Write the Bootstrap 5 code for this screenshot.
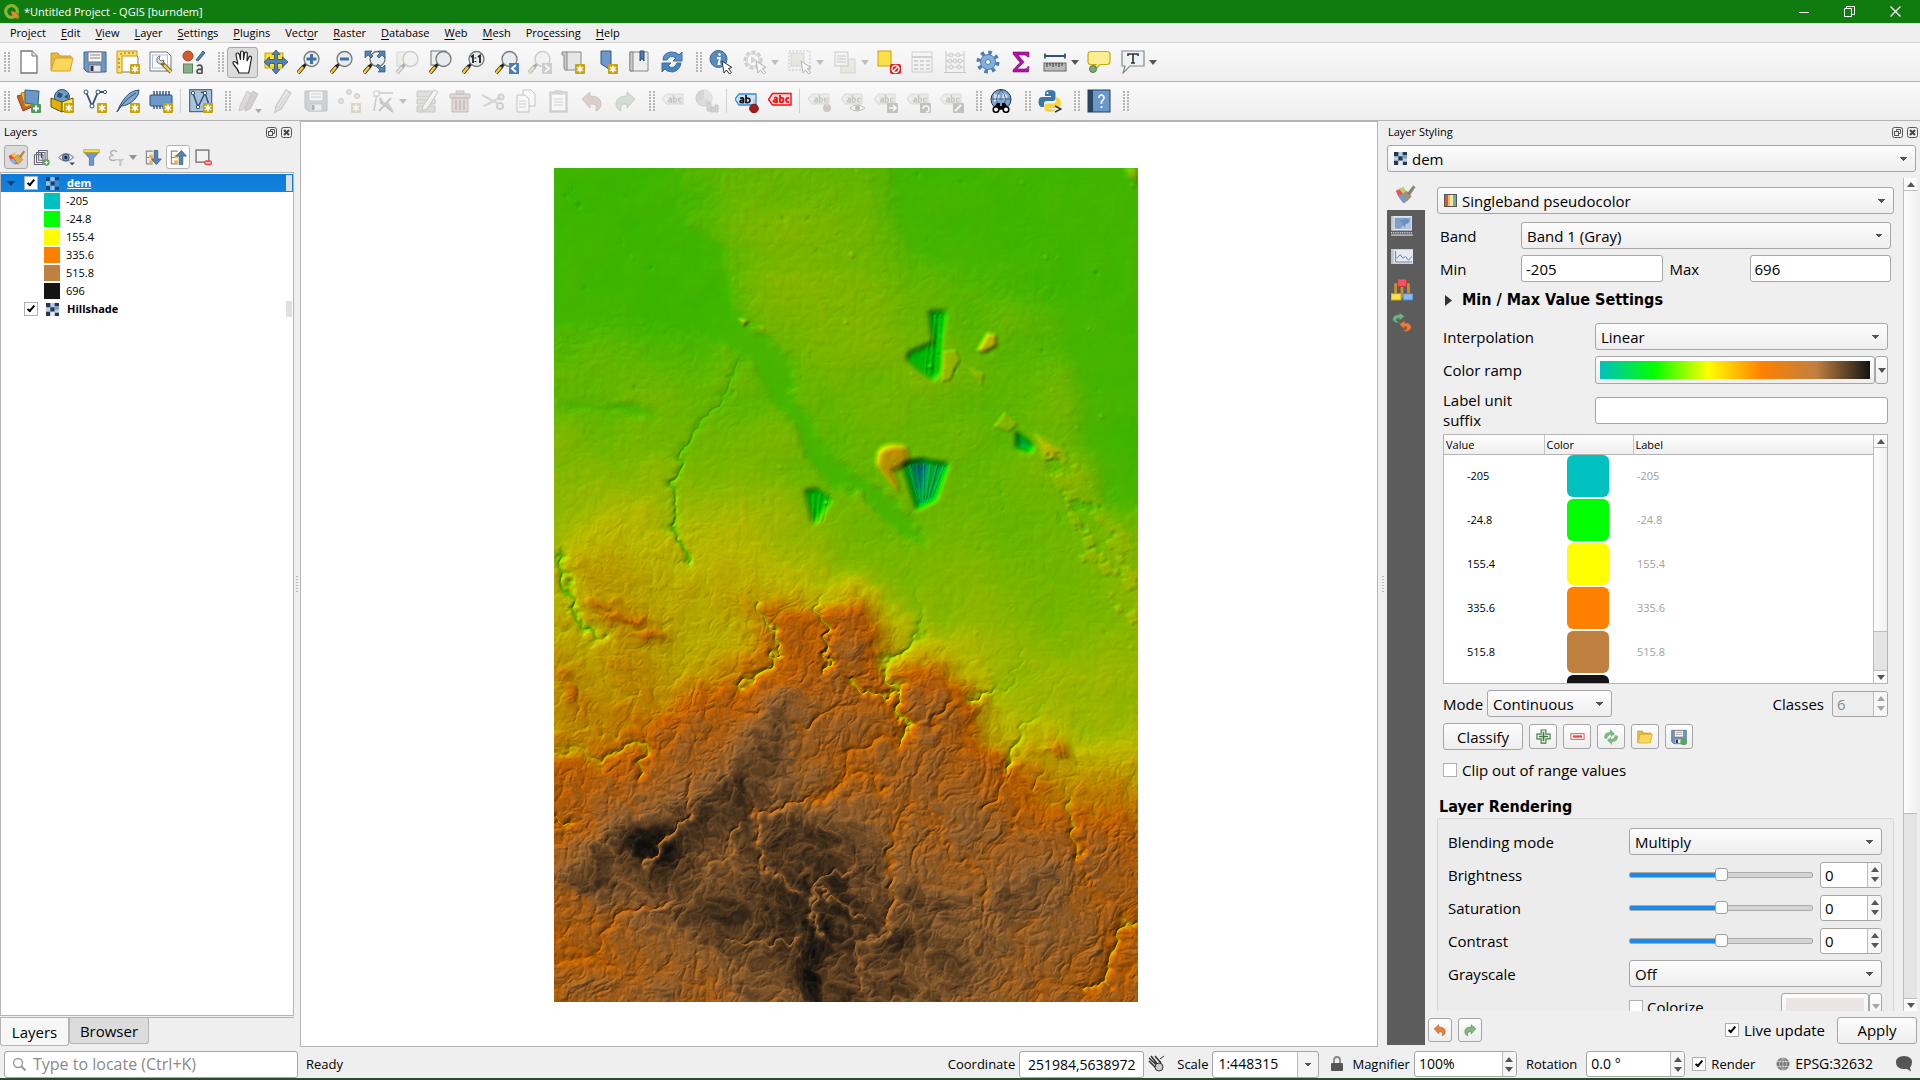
<!DOCTYPE html>
<html lang="en">
<head>
<meta charset="utf-8">
<meta name="viewport" content="width=device-width, initial-scale=1">
<title>*Untitled Project - QGIS [burndem]</title>
<link rel="stylesheet" href="https://cdn.jsdelivr.net/npm/bootstrap@5.3.0/dist/css/bootstrap.min.css">
<style>
:root{--ui:#efefef;--line:#b4b4b4;--ink:#000}
body{font-family:"Open Sans","Noto Sans",sans-serif;font-size:15px;line-height:20px;color:var(--ink);background:var(--ui);overflow:hidden}
button,select,input{font-family:inherit;color:inherit}
svg{display:block;flex:none}
.titlebar{background:#107c10;color:#fff;height:23px;font-size:11px}
.winbtn{width:46px;height:23px;border:0;background:none;padding:0 3px 0 0}
.menus{height:20px;border-bottom:1px solid #d4d4d4;padding-left:3px;font-size:11px;gap:1px}
.menus a{color:#000;text-decoration:none;padding:0 7px;line-height:20px}
.menus u{text-underline-offset:2px}
.tools{height:39px;background:linear-gradient(#fafafa,#eee);border-bottom:1px solid var(--line);padding-left:4px;gap:2px}
.grip{width:6px;height:20px;margin:0 1px 0 7px;background:radial-gradient(circle at 1px 1px,#b5b5b5 1px,transparent 1px) 0 0/4px 3px}
.grip.first{margin-left:0}
.tbtn{width:31px;height:31px;border:1px solid transparent;border-radius:3px;background:none;padding:2px;display:flex;align-items:center;justify-content:center}
.tbtn svg{width:24px;height:24px}
.tbtn.on{background:#dcdcdc;border-color:#a8a8a8}
.tbtn.drop{width:43px;justify-content:flex-start;gap:4px;padding-left:4px}
.tbtn:disabled{opacity:.34;filter:grayscale(.7)}
.arr{width:0;height:0;border:4px solid transparent;border-top:5px solid #555;border-bottom:0;flex:none}
.arr.up{border-top:0;border-bottom:5px solid #555}
.vsep{width:1px;height:24px;background:#cfcfcf;margin:0 2px}
.dock-left{width:294px}
.dock-right{width:533px}
.dock-title{height:24px;font-size:11px;padding:0 2px 2px 4px}
.dock-title.r{padding-left:1px}
.sq{width:11px;height:11px;padding:0;border:0;background:none;display:flex}
.ltools{height:27px;padding:0 4px;gap:1px}
.lbtn{width:24px;height:24px;border:1px solid transparent;border-radius:3px;background:none;padding:0;display:flex;align-items:center;justify-content:center}
.lbtn svg{width:17px;height:17px}
.lbtn.on{background:#dcdcdc;border-color:#a8a8a8}
.lbtn.lit{background:#fff;border-color:#b4b4b4}
.lbtn.menu2{width:36px;gap:4px;opacity:.6}
.tree{border:1px solid var(--line);background:#fff;font-size:11px;padding-top:1px}
.trow{height:18px;line-height:18px;padding:0 1px 0 23px}
.trow.sel{background:linear-gradient(#0c7adb,#1483dd);color:#fff;padding-left:6px}
.trow.sel .arr{border-top-color:#0b3a66;margin-right:9px}
.trow .mark2{width:6px;height:16px;background:#e0e0e0;margin-left:auto}
.trow.leg{padding-left:43px}
.sw{width:16px;height:16px;margin-right:6px}
.chk{appearance:none;width:14px;height:14px;border:1px solid #b0b0b0;background:#fff;margin:0;flex:none;position:relative;border-radius:0}
.chk:checked::after{content:"";position:absolute;left:4px;top:1px;width:4px;height:8px;border:solid #000;border-width:0 2px 2px 0;transform:rotate(40deg)}
.dtabs{border-top:1px solid var(--line);margin-top:1px;height:30px}
.dtab{border:1px solid var(--line);border-top:0;border-radius:0 0 3px 3px;font-size:15px;padding:0;height:28px;width:69px;background:#f7f7f7}
.dtab.off{background:#dcdcdc;width:80px;height:26px}
.split{width:6px;display:flex;align-items:center;justify-content:center}
.split.wide{width:9px}
.split i{width:2px;height:17px;background:repeating-linear-gradient(#bbb 0 1px,transparent 1px 3px)}
.mapview{background:#fff;border:1px solid var(--line);padding:2px 0 0 14px}
.mapview canvas{width:584px;max-height:100%}
.field{border:1px solid #a6a6a6;border-radius:3px;background-color:#fff;height:27px;padding:0 4px;font-size:15px;line-height:20px;color:#000;min-width:0}
select.field{appearance:none;padding-left:5px;background-image:linear-gradient(45deg,transparent 50%,#555 50%),linear-gradient(135deg,#555 50%,transparent 50%),linear-gradient(#fdfdfd,#eee);background-size:4px 4px,4px 4px,100% 100%;background-position:right 11px top 11px,right 7px top 11px,0 0;background-repeat:no-repeat}
.withicon{position:relative}
.withicon svg{position:absolute;left:7px;top:7px}
.withicon select{width:100%;padding-left:24px}
.push{border:1px solid #a6a6a6;border-radius:3px;background:linear-gradient(#fdfdfd,#eee);height:27px;font-size:15px;padding:0;display:flex;align-items:center;justify-content:center}
.push.wide{width:80px}
.push.mini{width:28px;height:25px}
.push.small2{width:24px;height:24px}
.push.more{width:13px;height:28px}
.sidetabs{width:38px;background:#5c5c5c;margin-bottom:2px}
.sidetabs button{width:38px;height:31px;border:0;background:none;padding:0 8px 0 0;display:flex;align-items:center;justify-content:center}
.sidetabs button:first-child{background:var(--ui);height:32px;padding:0 3px 0 0}
.sidetabs .tall{height:35px}
.body2{padding-top:6px;min-height:0}
.scrollrow{flex:1 1 0;min-height:0}
.styler{overflow:hidden;padding:9px 9px 0 12px;min-width:0}
.vbar{width:14px;flex:none;border-left:1px solid #bdbdbd;background:#e4e4e4}
.vbar .cap{height:13px;background:#fcfcfc;border-bottom:1px solid #bdbdbd;display:flex;align-items:center;justify-content:center}
.vbar .cap.dn{border-bottom:0;border-top:1px solid #bdbdbd}
.vbar .thumb{background:linear-gradient(90deg,#fdfdfd,#f1f1f1);border-bottom:1px solid #bdbdbd}
.frow{display:flex;align-items:center}
.frow+.frow{margin-top:6px}
.head2{font-family:"DejaVu Sans Condensed","Open Sans",sans-serif;font-weight:700;font-size:16px;line-height:22px}
.w-band{width:81px;flex:none}.w-interp{width:152px;flex:none}.w-blend{width:181px;flex:none}
.w-max{width:87px;flex:none;padding-left:7px}
.inset-a{padding:0 3px}
.inset-b{padding:0 6px}
.disclose{margin:7px 0 12px 8px;gap:9px}
.ramp{height:28px;padding:4px}
.ramp span{display:block;width:100%;height:100%;background:linear-gradient(90deg,#00c0c0,#00ff00 20%,#ffff00 40%,#ff8000 60%,#c08040 80%,#141414)}
.ramp.pale{width:88px}
.ramp.pale span{background:#ebe4e4}
.classes{border:1px solid var(--line);height:250px;background:#fff;font-size:11px;margin:4px 0 6px}
.classes table{width:100%;border-collapse:collapse}
.classes th{height:19px;line-height:17px;font-weight:400;padding:0 2px;border-right:1px solid #c4c4c4;border-bottom:1px solid var(--line);background:linear-gradient(#fff,#eee)}
.classes th:last-child{border-right:0}
.classes td{height:44px;padding:0}
.classes td:first-child{padding-left:23px}
.classes td:last-child{padding-left:4px;color:#a0a0a0}
.c-val{width:100px}.c-col{width:89px}
.chip{width:42px;height:42px;border-radius:6px;margin-left:23px}
.spin{display:flex;flex:none;border:1px solid #a6a6a6;border-radius:3px;background:#fff;height:26px;overflow:hidden}
.spin input{border:0;width:100%;min-width:0;padding:0 4px;background:none;font-size:15px;line-height:20px}
.spin .steps{width:14px;flex:none;border-left:1px solid #bdbdbd;background:#f6f6f6;display:flex;flex-direction:column;align-items:center;justify-content:center;gap:5px}
.spin.dis{background:#ededed}.spin.dis input{color:#8a8a8a}.spin.dis .arr{opacity:.5}
.spin.s56{width:56px}.spin.s62{width:62px}.spin.s99{width:99px}.spin.s103{width:103px}
.group{border:1px solid #d6d6d6;border-radius:2px;background:#ececec;padding:6px 11px 0 10px}
.group .frow{height:33px;margin:0}
input[type=range]{appearance:none;background:none;width:100%;min-width:0;height:14px;margin:0 7px 0 0;display:block}
input[type=range]::-webkit-slider-runnable-track{height:6px;border:1px solid #aaa;border-radius:2px;background:linear-gradient(90deg,#1a8ae6 50%,#d4d4d4 50%)}
input[type=range]::-webkit-slider-thumb{appearance:none;width:13px;height:13px;margin-top:-5px;border:1px solid #a0a0a0;border-radius:3px;background:#fbfbfb}
.foot{height:36px;padding:2px 3px 0}
.statusbar{height:33px;padding-top:3px;font-size:14px;border-bottom:2px solid #2d4a2d}
.statusbar label,.statusbar .txt{font-size:13px;white-space:nowrap}
.statusbar .txt.crs{font-size:14px}
.statusbar .field,.statusbar .spin input{font-size:14px}
.locate{width:294px;position:relative}
.locate .field{width:100%;padding-left:28px;font-size:16px}
.locate input::placeholder{color:#8a8a8a;opacity:1}
.locate svg{position:absolute;left:8px;top:6px}
.w125{width:125px}
select.field.split2{width:107px;background-image:linear-gradient(45deg,transparent 50%,#555 50%),linear-gradient(135deg,#555 50%,transparent 50%),linear-gradient(#bbb,#bbb),linear-gradient(#f4f4f4,#f4f4f4);background-size:4px 4px,4px 4px,1px 100%,20px 100%;background-position:right 10px top 11px,right 6px top 11px,right 20px top 0,right 0 top 0}
</style>
<script src="https://cdn.jsdelivr.net/npm/bootstrap@5.3.0/dist/js/bootstrap.bundle.min.js"></script>
</head>
<body class="d-flex flex-column vh-100">

<svg width="0" height="0" class="position-absolute" aria-hidden="true">
<defs>
<g id="star"><rect x="14" y="14" width="10" height="10" rx="1" fill="#c9a20c"/><path d="M19 15.500v7M15.800 17.200l6.400 3.600M22.200 17.200l-6.400 3.600" stroke="#fff" stroke-width="1.500"/><circle cx="19" cy="19" r="1.600" fill="#fff"/></g>
<g id="lens"><path d="M1 23l6-7" stroke="#333" stroke-width="4"/><path d="M1 23l5-6" stroke="#fbc92e" stroke-width="2.400"/><path d="M6.500 16.500l3-3" stroke="#222" stroke-width="3"/><circle cx="14.500" cy="9" r="7.500" fill="#e8ecee" stroke="#777" stroke-width="1.300"/></g>
<g id="tag"><path d="M0 10l4-5h17v10H4z" fill="#d6d6be" stroke="#a8a890"/><circle cx="4" cy="10" r="1" fill="#fff"/><path d="M7 9.500q2-1 2.500.5v3q-3 .5-3-1t3-.8M11.500 6v7q3 .5 3-2t-3-1.800M19.500 9.500q-3-.7-3 1.700t3 1.500" fill="none" stroke="#666" stroke-width="1.300"/></g>
<g id="arrowcur"><path d="M13 11l2 12 2.500-3 3 4 2-1.500-3-4 3.500-1z" fill="#fff" stroke="#333"/></g>
</defs>
<symbol id="new" viewBox="0 0 24 24"><path d="M4 1h11l5 5v17H4z" fill="#fff" stroke="#777" stroke-width="1.300"/><path d="M15 1v5h5" fill="#e4e4e4" stroke="#777"/></symbol>
<symbol id="open" viewBox="0 0 24 24"><path d="M1 20V3h7l2 3h11v3" fill="#e6b93c" stroke="#c8992a"/><path d="M1 21L5 8h18l-3 13z" fill="#fbd65a" stroke="#d0a130"/></symbol>
<symbol id="save" viewBox="0 0 24 24"><path d="M1 2h22v20H4l-3-3z" fill="#6a98c8" stroke="#41658c"/><rect x="5" y="2" width="14" height="10" fill="#f4f4f4" stroke="#777"/><path d="M7 5h10M7 8h10" stroke="#888"/><rect x="6" y="15" width="12" height="7" fill="#e8e8e8" stroke="#777"/><rect x="7.500" y="16" width="3" height="5" fill="#335"/></symbol>
<symbol id="layout" viewBox="0 0 24 24"><path d="M5 3h13l4 4v15H5z" fill="#fff" stroke="#777"/><path d="M1 1h20v5H6v17H1z" fill="#fce06c" stroke="#c9970c"/><path d="M4 4h2M9 2v2M13 2v2M17 2v2M2 9h2M2 13h2M2 17h2" stroke="#8a6500"/><use href="#star"/></symbol>
<symbol id="manager" viewBox="0 0 24 24"><path d="M1 2h17l4 4v15H1z" fill="#fff" stroke="#777"/><rect x="3.500" y="5" width="15" height="13" fill="none" stroke="#a9c3e8"/><path d="M12 12l10 10" stroke="#77662a" stroke-width="4"/><path d="M15 15l7 7" stroke="#f5d36a" stroke-width="2.200"/><path d="M8 8q1-2 3-2l-1 3 2 2 3-1q0 4-4 4-4-1-3-6z" fill="#ddd" stroke="#777"/></symbol>
<symbol id="style" viewBox="0 0 24 24"><circle cx="6" cy="6" r="5" fill="#d65a30" stroke="#a2401c"/><path d="M14 10l7-9 2 2-7 8z" fill="#5580b0" stroke="#39608c"/><rect x="1.500" y="14" width="9" height="9" fill="#8ab08a" stroke="#5a855a"/><path d="M15 16q4-2 5 1v6q-5 1.500-5-1.500t5-2" fill="none" stroke="#555" stroke-width="1.800"/></symbol>
<symbol id="hand" viewBox="0 0 24 24"><path d="M8 23q-1-4-5-8-2-3 0-3.500 2 0 4 3L5 5q0-2 1.500-2T8.500 5l1 5V2.500Q9.700 1 11 1t1.500 1.500V10l1-6.500q.4-1.500 1.700-1.300T16.300 4L16 11l2-4q1-1.200 2-.5t.3 2.500L19 16q-.5 4-1.500 7z" fill="#fff" stroke="#222" stroke-width="1.200"/></symbol>
<symbol id="panto" viewBox="0 0 24 24"><rect x="1" y="3" width="18" height="15" fill="#fbe02c" stroke="#c9a20c"/><path d="M12 0l4 4.500h-2.500v5h5V7L24 12l-5.500 5v-3.500h-5v6H16L12 24l-4-4.500h2.500v-6h-5V17L0 12l5.500-5v2.500h5v-5H8z" fill="#5583b4" stroke="#2e4f73" stroke-width=".8"/></symbol>
<symbol id="zin" viewBox="0 0 24 24"><use href="#lens"/><path d="M14.500 4v10M9.500 9h10" stroke="#3f70a8" stroke-width="3"/></symbol>
<symbol id="zout" viewBox="0 0 24 24"><use href="#lens"/><path d="M10 9h9" stroke="#3f70a8" stroke-width="3"/></symbol>
<symbol id="zfull" viewBox="0 0 24 24"><use href="#lens"/><path d="M2 1h7L7 3l3 3-2 2-3-3-3 3zM22 1h-7l2 2-3 3 2 2 3-3 3 3zM22 22h-7l2-2-4-4 2-2 4 4 3-3z" fill="#5583b4" stroke="#2e4f73" stroke-width=".7"/></symbol>
<symbol id="zsel" viewBox="0 0 24 24"><rect x="1" y="2" width="14" height="14" fill="#f0e28a" stroke="#999"/><use href="#lens"/></symbol>
<symbol id="zlay" viewBox="0 0 24 24"><rect x="2" y="1" width="15" height="14" fill="#eee" stroke="#777"/><use href="#lens"/></symbol>
<symbol id="znat" viewBox="0 0 24 24"><use href="#lens"/><path d="M9 7l2-1.500V13M13.500 7.500v1M13.500 11v1M16 7l2-1.500V13" stroke="#222" stroke-width="1.800" fill="none"/></symbol>
<symbol id="zlast" viewBox="0 0 24 24"><use href="#lens"/><rect x="14" y="13" width="10" height="11" fill="#4b7eb5"/><path d="M21 15l-4 3.500 4 3.500" stroke="#fff" stroke-width="2" fill="none"/></symbol>
<symbol id="znext" viewBox="0 0 24 24"><use href="#lens"/><rect x="14" y="13" width="10" height="11" fill="#888"/><path d="M17 15l4 3.500-4 3.500" stroke="#fff" stroke-width="2" fill="none"/></symbol>
<symbol id="newmap" viewBox="0 0 24 24"><path d="M5 2h15v18H5z" fill="#e6e6e6" stroke="#888"/><path d="M1 2h5v18q-3 1-3-3V5H1z" fill="#ccc" stroke="#888"/><use href="#star"/></symbol>
<symbol id="bookn" viewBox="0 0 24 24"><path d="M7 1h10v20l-5-4-5-3z" fill="#6a98c8" stroke="#2e5a8c"/><use href="#star"/></symbol>
<symbol id="bookm" viewBox="0 0 24 24"><path d="M3 2h18v19H3z" fill="#eee" stroke="#888"/><path d="M3 2h3v19H3z" fill="#ccc" stroke="#888"/><path d="M13 1h4v10l-2-3-2 3z" fill="#4b7eb5" stroke="#2a4a70"/></symbol>
<symbol id="refresh" viewBox="0 0 24 24"><path d="M3 10q0-7 8-8 6 0 8 3l3-3v9h-9l3-3q-6-4-9 2z" fill="#5b92cc" stroke="#3a6ea8"/><path d="M21 13q-1 7-8 9-6 0-8-3l-3 3v-9h9l-3 3q6 4 9-3z" fill="#4a80bd" stroke="#3a6ea8"/></symbol>
<symbol id="info" viewBox="0 0 24 24"><circle cx="9.500" cy="9" r="8.500" fill="#5a8ac0" stroke="#3c6898"/><path d="M8 8h3l-1.500 6h2" stroke="#fff" stroke-width="1.800" fill="none"/><circle cx="10.500" cy="4.500" r="1.300" fill="#fff"/><use href="#arrowcur"/></symbol>
<symbol id="action" viewBox="0 0 24 24"><circle cx="10" cy="10" r="8" fill="#ddd" stroke="#888" stroke-width="3" stroke-dasharray="4 2"/><circle cx="10" cy="10" r="6" fill="#fff" stroke="#888"/><path d="M8 6l6 4-6 4z" fill="#999"/><use href="#arrowcur"/></symbol>
<symbol id="select" viewBox="0 0 24 24"><rect x="1" y="1" width="21" height="19" fill="none" stroke="#666" stroke-dasharray="2 1.500"/><rect x="3" y="3" width="13" height="13" fill="#d8cf8a" stroke="#999"/><use href="#arrowcur"/></symbol>
<symbol id="form" viewBox="0 0 24 24"><rect x="8" y="9" width="14" height="14" fill="#e4d98a" stroke="#999"/><rect x="2" y="2" width="13" height="14" fill="#eee" stroke="#777"/><path d="M4 6h9M4 9h9M4 12h9" stroke="#777"/></symbol>
<symbol id="desel" viewBox="0 0 24 24"><rect x="1" y="1" width="13" height="15" fill="#fbe04a" stroke="#c9a20c"/><rect x="13" y="14" width="11" height="10" rx="2" fill="#d22"/><circle cx="18.500" cy="19" r="3.500" fill="none" stroke="#fff" stroke-width="1.400"/><path d="M16 21.500l5-5" stroke="#fff" stroke-width="1.400"/></symbol>
<symbol id="tabl" viewBox="0 0 24 24"><rect x="2" y="2" width="20" height="20" fill="#f2f2f2" stroke="#888"/><path d="M2 7h20" stroke="#888" stroke-width="2"/><path d="M4 11h4M10 11h4M16 11h4M4 15h4M10 15h4M16 15h4M4 19h4M10 19h4M16 19h4" stroke="#777" stroke-width="1.400"/></symbol>
<symbol id="abac" viewBox="0 0 24 24"><path d="M3 1v21M21 1v21M1 22.500h22M3 5h18M3 11h18M3 17h18" stroke="#777"/><g fill="#ddd" stroke="#777"><circle cx="8" cy="5" r="2"/><circle cx="15" cy="5" r="2"/><circle cx="7" cy="11" r="2"/><circle cx="12" cy="11" r="2"/><circle cx="17" cy="11" r="2"/><circle cx="8" cy="17" r="2"/><circle cx="16" cy="17" r="2"/></g></symbol>
<symbol id="gear" viewBox="0 0 24 24"><circle cx="12" cy="12" r="9.500" fill="none" stroke="#4b7eb5" stroke-width="4" stroke-dasharray="3.500 3.960"/><circle cx="12" cy="12" r="7.500" fill="#85aedb" stroke="#4b7eb5"/><circle cx="12" cy="12" r="2.500" fill="#f4f4f4" stroke="#4b7eb5"/></symbol>
<symbol id="sigma" viewBox="0 0 24 24"><path d="M4 2h16v5h-1.500q-.5-2-3-2H9l6 7-7 7h8q2.500 0 3-2.500H20L19.500 22H4v-2l7-7.500L4 4z" fill="#b312a8" stroke="#7d0d75" stroke-width=".6"/></symbol>
<symbol id="ruler" viewBox="0 0 24 24"><path d="M2 6h20M2 3.500v5M22 3.500v5" stroke="#2e5378" stroke-width="1.800"/><rect x="1" y="13" width="22" height="8" fill="#bbb" stroke="#666"/><path d="M4 13v4M7 13v3M10 13v4M13 13v3M16 13v4M19 13v3" stroke="#333"/></symbol>
<symbol id="tip" viewBox="0 0 24 24"><path d="M4 1.500h16q3 0 3 3v7q0 3-3 3h-7L8 20l1-5.500H4q-3 0-3-3v-7q0-3 3-3z" fill="#fbee92" stroke="#c9a912" stroke-width="1.200"/><circle cx="6" cy="19" r="3.500" fill="#7ba67b" stroke="#4f7d4f"/></symbol>
<symbol id="annot" viewBox="0 0 24 24"><path d="M1 1h22v15H9l-7 7 2-7H1z" fill="#eef3f6" stroke="#888" stroke-width="1.200"/><path d="M7 6V4h10v2M12 4v9M10 13h4" stroke="#333" stroke-width="1.600" fill="none"/></symbol>
<symbol id="dsm" viewBox="0 0 24 24"><path d="M0 7l13-3 4 13-11 5z" fill="#d2602c" stroke="#8c3d18"/><path d="M4 4l12-2 4 13-12 3z" fill="#f0bd22" stroke="#a88010"/><path d="M8 1l14 1-1 14-13-2z" fill="#6a98c8" stroke="#38608c"/><rect x="14" y="15" width="10" height="9" rx="1" fill="#4f9a5c"/><path d="M19 16.500v6M16 19.500h6" stroke="#fff" stroke-width="1.800"/></symbol>
<symbol id="gpkg" viewBox="0 0 24 24"><circle cx="12" cy="8" r="7.500" fill="#6f9bcb" stroke="#2d4f78"/><path d="M8 3l5 2-2 4-4-1zM14 8l4-3v5z" fill="#2f5078"/><path d="M1 9l11 4v10L1 18z" fill="#e0b012" stroke="#6b5200"/><path d="M12 13l11-4v9l-11 5z" fill="#fbe44a" stroke="#6b5200"/><use href="#star"/></symbol>
<symbol id="shp" viewBox="0 0 24 24"><path d="M3 3l6 14 6-14h7" stroke="#34516e" stroke-width="1.800" fill="none"/><g fill="#fff" stroke="#34516e"><circle cx="3" cy="3" r="2"/><circle cx="9" cy="17" r="2"/><circle cx="15" cy="3" r="2"/><circle cx="22" cy="3" r="1.600"/></g><use href="#star"/></symbol>
<symbol id="quill" viewBox="0 0 24 24"><path d="M1 23Q6 10 14 4q5-3 9-3 0 5-4 9Q12 17 5 17z" fill="#7fa7d2" stroke="#2d4f78"/><path d="M1 23Q8 11 20 4" stroke="#2d4f78" fill="none"/><use href="#star"/></symbol>
<symbol id="chip" viewBox="0 0 24 24"><path d="M5 2v18M8 2v18M11 2v18M14 2v18M17 2v14M20 2v14" stroke="#2d4f78" stroke-width="1.400"/><rect x="1" y="6" width="22" height="11" rx="1" fill="#6a98c8" stroke="#2d4f78"/><use href="#star"/></symbol>
<symbol id="virt" viewBox="0 0 24 24"><rect x=".700" y=".700" width="22" height="22" fill="#a9c3de" stroke="#34516e"/><path d="M4 4l5 14L16 4l4 12M16 4l-4-1" stroke="#34516e" stroke-width="1.500" fill="none"/><g fill="#fff" stroke="#34516e"><circle cx="4" cy="4" r="1.700"/><circle cx="9" cy="18" r="1.700"/><circle cx="16" cy="4" r="1.700"/></g><use href="#star"/></symbol>
<symbol id="pencils" viewBox="0 0 24 24"><path d="M1 22L2 17 9 2l5 3L6 20z" fill="#b9a9a0" stroke="#777"/><path d="M7 22l1-5 7-15 5 3-8 15z" fill="#a08c84" stroke="#666"/><path d="M17 20h7l-3.500 4z" fill="#222"/></symbol>
<symbol id="pencil" viewBox="0 0 24 24"><path d="M4 23l1-6L15 1l5 3-10 16z" fill="#d8cfa8" stroke="#777" stroke-width="1.300"/><path d="M8 18L18 3M5 17l5 3" stroke="#888"/></symbol>
<symbol id="vertex" viewBox="0 0 24 24"><g fill="#bbb" stroke="#777"><circle cx="4" cy="12" r="2.500"/><circle cx="12" cy="3" r="2.500"/><circle cx="20" cy="7" r="2.500"/></g><use href="#star"/></symbol>
<symbol id="node" viewBox="0 0 24 24"><path d="M3 22L6 4h16" stroke="#777" fill="none" stroke-width="1.500"/><rect x="3" y="2" width="5" height="5" fill="#fff" stroke="#777"/><path d="M9 9l3 5 5 1 5 8-4-3-4-4-4-2zM20 9L8 22" fill="#bbb" stroke="#777" stroke-width="2"/></symbol>
<symbol id="attr" viewBox="0 0 24 24"><path d="M2 2h18v6H2zM2 10h18v5H2zM2 17h18v6H2z" fill="#bdb38a" stroke="#777"/><path d="M7 22l1-5L19 1l4 2-11 17z" fill="#eee" stroke="#666"/></symbol>
<symbol id="trash" viewBox="0 0 24 24"><path d="M2 5h20v4H2zM8 2h8v3H8zM4 9h16v14H4z" fill="#d8a0a0" stroke="#a44"/><path d="M8 11v10M12 11v10M16 11v10" stroke="#a44" stroke-width="1.600"/></symbol>
<symbol id="cut" viewBox="0 0 24 24"><path d="M1 6l15 8M3 17L20 8" stroke="#999" stroke-width="2.200"/><circle cx="19" cy="17" r="3" fill="none" stroke="#888" stroke-width="2"/><circle cx="20" cy="8" r="2.600" fill="none" stroke="#888" stroke-width="2"/></symbol>
<symbol id="copy" viewBox="0 0 24 24"><path d="M9 1h8l4 4v12H9z" fill="#fff" stroke="#666"/><path d="M3 6h8l4 4v13H3z" fill="#fff" stroke="#666"/><path d="M5 12h7M5 15h7M5 18h7" stroke="#888"/></symbol>
<symbol id="paste" viewBox="0 0 24 24"><rect x="3" y="3" width="17" height="20" fill="#b9b0a0" stroke="#666"/><rect x="5" y="6" width="13" height="15" fill="#fff"/><rect x="8" y="1" width="7" height="4" fill="#999"/><path d="M7 10h9M7 13h9M7 16h9" stroke="#888"/></symbol>
<symbol id="undo" viewBox="0 0 24 24"><path d="M2 10l8-7v4q11 0 11 8 0 5-5 7 2-8-6-7v4z" fill="#e8803c" stroke="#b85a20"/></symbol>
<symbol id="redo" viewBox="0 0 24 24"><path d="M22 10l-8-7v4Q3 7 3 15q0 5 5 7-2-8 6-7v4z" fill="#7fb97f" stroke="#4f8a4f"/></symbol>
<symbol id="tagg" viewBox="0 0 24 24"><use href="#tag"/></symbol>
<symbol id="diag" viewBox="0 0 24 24"><circle cx="9" cy="9" r="8" fill="#99a" stroke="#777"/><path d="M9 9V1a8 8 0 0 1 7 12z" fill="#cc9"/><path d="M9 9l-7 4a8 8 0 0 0 10 3z" fill="#9b9"/><path d="M12 14h4v8h-4zM16 18h3v5h-3zM20 16h3v7h-3z" fill="#999" stroke="#777"/></symbol>
<symbol id="abpin" viewBox="0 0 24 24"><path d="M0 10l4-5h17v11H4z" fill="#cfe2f8" stroke="#3c86d8" stroke-width="1.300"/><path d="M5 9.500q3-1.500 3.500.5v3.500q-3.500.5-3.500-1t3.500-1M11 6v7.500q4 .7 4-2T11 9" fill="none" stroke="#111" stroke-width="1.700"/><path d="M19 10v8" stroke="#ccc" stroke-width="2"/><circle cx="19" cy="19.500" r="4.300" fill="#a61c1c" stroke="#701010"/></symbol>
<symbol id="abcred" viewBox="0 0 24 24"><path d="M.500 10.500l4-6H23V16H4.500z" fill="#ffd9d9" stroke="#e11" stroke-width="1.400"/><path d="M6 9q3-1.200 3 .5v3.500q-3.500.5-3.500-1t3.500-1M12 6v7q3.500.7 3.500-2T12 9M21 9q-3-.7-3 2t3 2" fill="none" stroke="#e11" stroke-width="1.800"/></symbol>
<symbol id="tpin" viewBox="0 0 24 24"><use href="#tag"/><circle cx="19" cy="19" r="4" fill="#b66"/><path d="M19 9v8" stroke="#aaa" stroke-width="2"/></symbol>
<symbol id="teye" viewBox="0 0 24 24"><use href="#tag"/><path d="M9 19q7-6 15 0-8 6-15 0z" fill="#fff" stroke="#555"/><circle cx="16.500" cy="19" r="2.500" fill="#555"/></symbol>
<symbol id="tmove" viewBox="0 0 24 24"><use href="#tag"/><rect x="13" y="14" width="11" height="10" rx="1" fill="#666"/><path d="M15 19h7M19 16l3 3-3 3" stroke="#fff" stroke-width="1.600" fill="none"/></symbol>
<symbol id="trot" viewBox="0 0 24 24"><use href="#tag"/><rect x="13" y="14" width="11" height="10" rx="1" fill="#666"/><path d="M16 20a3 3 0 1 1 3 3" stroke="#fff" stroke-width="1.600" fill="none"/></symbol>
<symbol id="tedit" viewBox="0 0 24 24"><use href="#tag"/><rect x="13" y="14" width="11" height="10" rx="1" fill="#666"/><path d="M15 22l6-6" stroke="#fff" stroke-width="2"/></symbol>
<symbol id="meta" viewBox="0 0 24 24"><circle cx="12" cy="10.500" r="10" fill="#7ea5cf" stroke="#20344c"/><path d="M5 5l6 1-1 5-5 2zM14 3l5 4-3 5-3-3z" fill="#d3e1ef"/><path d="M2 10h20M12 1q-9 9 0 19q9-10 0-19" stroke="#2d4f78" fill="none" stroke-width=".8"/><path d="M8 14h3v3h2v-3h3l4 6H4z" fill="#000"/><g fill="#fff" stroke="#000" stroke-width="1.600"><circle cx="7" cy="20.500" r="2.800"/><circle cx="17" cy="20.500" r="2.800"/></g></symbol>
<symbol id="py" viewBox="0 0 24 24"><path d="M12 1q-5 0-5 3v3h6v1H4q-3.500 0-3.500 5T4 18h2v-3q0-3 3-3h6q2.500 0 2.500-3V4q0-3-5.500-3z" fill="#3c76ac"/><path d="M12 23q5 0 5-3h-6v-1h8q4 0 4-5t-4-5.500h-1V12q0 2.500-3 2.500H9q-2.500 0-2.500 3V20q0 3 5.500 3z" fill="#fbd540"/><path d="M17 17l6 3-6 3" stroke="#333" stroke-width="1.500" fill="none"/><circle cx="9.500" cy="4" r="1" fill="#fff"/></symbol>
<symbol id="help" viewBox="0 0 24 24"><rect x="1" y="1" width="22" height="22" fill="#6a98c8" stroke="#24405c"/><path d="M1 1h5v22H1z" fill="#28455f"/><path d="M12 9q0-3 2.500-3T17 9q0 1.500-2.500 3.500V15" stroke="#fff" stroke-width="1.600" fill="none"/><circle cx="14.500" cy="18" r="1.100" fill="#fff"/></symbol>
<symbol id="brush" viewBox="0 0 24 24"><path d="M1 8l9-4 8 12-7 7Q4 17 1 8z" fill="#e8515e"/><path d="M5 6l5-2 8 10-5 2z" fill="#b4d468"/><path d="M4 14l6-2 4 8-4 3z" fill="#6d9bd6"/><path d="M8 13l6-5 6 7-6 6z" fill="#9a927a"/><path d="M15 11l7-9 2 2-6 9z" fill="#8a8468" stroke="#6e6848" stroke-width=".6"/></symbol>
<symbol id="brush2" viewBox="0 0 24 24"><path d="M1 10l8-5 8 12-6 5Q3 18 1 10z" fill="#e8404e"/><path d="M4 8l5-3 6 8-4 2z" fill="#f2c83a"/><path d="M2 15l6-2 4 6-4 3z" fill="#8aaede"/><path d="M8 13l7-5 6 7-7 7z" fill="#dca854" stroke="#9c6c2c" stroke-width=".7"/><path d="M15 11l7-9 2 2-6 9z" fill="#b98238"/></symbol>
<symbol id="addgrp" viewBox="0 0 24 24"><path d="M2 8h12v14H2zM5 5h12v14H5zM8 2h12v14H8z" fill="#f6f6f6" stroke="#667" stroke-width="1.500"/><path d="M12 5v8" stroke="#334f6e" stroke-width="2"/><circle cx="19" cy="19" r="4.500" fill="#5da35d"/><path d="M19 16.500v5M16.500 19h5" stroke="#fff" stroke-width="1.600"/></symbol>
<symbol id="eye" viewBox="0 0 24 24"><path d="M1 12Q11 1 22 12 11 22 1 12z" fill="#eee" stroke="#999" stroke-width="1.500"/><circle cx="11" cy="12" r="5" fill="#5f8fc4" stroke="#345"/><circle cx="11" cy="12" r="2" fill="#123"/><path d="M16 19h8l-4 4z" fill="#444"/></symbol>
<symbol id="filt" viewBox="0 0 24 24"><path d="M1 4h22l-8 9v10h-6V13z" fill="#6a98c8" stroke="#4a6f98"/><path d="M1 1h22v4H1z" fill="#fbe04a" stroke="#b89a1c"/></symbol>
<symbol id="eps" viewBox="0 0 24 24"><path d="M13 4Q8 0 4 4q-1 4 4 5-6 0-6 4 2 5 10 2" fill="none" stroke="#888" stroke-width="2"/><path d="M12 14h11l-4 4v6h-3v-6z" fill="#aaa"/></symbol>
<symbol id="expd" viewBox="0 0 24 24"><path d="M1 3h10M2 3v18h9M2 12h4" stroke="#888" fill="none" stroke-width="1.600"/><rect x="6" y="8" width="5" height="5" fill="#f5b042"/><rect x="6" y="16" width="5" height="5" fill="#f5b042"/><path d="M13 2h5v12h5l-7 8-7-8h4z" fill="#5583b4" stroke="#2e4f73"/></symbol>
<symbol id="coll" viewBox="0 0 24 24"><path d="M1 3h10M2 3v18h9M2 12h4" stroke="#888" fill="none" stroke-width="1.600"/><rect x="6" y="8" width="5" height="5" fill="#f5b042"/><rect x="6" y="16" width="5" height="5" fill="#f5b042"/><path d="M13 22h5V10h5l-7-8-7 8h4z" fill="#5583b4" stroke="#2e4f73"/></symbol>
<symbol id="rem" viewBox="0 0 24 24"><rect x="1.500" y="1.500" width="18" height="17" fill="#f2f2f2" stroke="#777" stroke-width="2"/><rect x="13" y="16" width="11" height="7" rx="3" fill="#f04a4a"/><path d="M15 19.500h7" stroke="#fff" stroke-width="1.600"/></symbol>
<symbol id="raster" viewBox="0 0 12 12"><rect width="12" height="12" fill="#b9cee8"/><path d="M0 0h4v4H0zM8 0h4v3H8zM4 4h4v4H4zM0 8h4v4H0zM8 9h4v3H8z" fill="#26384e"/><path d="M8 3h4v3H8z" fill="#7e9cc0"/><path d="M4 8h4v4H4z" fill="#dfe9f5"/></symbol>
<symbol id="rasterb" viewBox="0 0 12 12"><rect width="12" height="12" fill="#3c88d4"/><path d="M0 0h4v4H0zM8 0h4v3H8zM4 4h4v4H4zM0 8h4v4H0zM8 9h4v3H8z" fill="#16466e"/><path d="M4 0h4v4H4zM0 4h4v4H0zM4 8h4v4H4z" fill="#8cc0f0"/></symbol>
<symbol id="float" viewBox="0 0 11 11"><rect x=".5" y=".5" width="10" height="10" rx="2" fill="none" stroke="#555"/><rect x="2.500" y="4.500" width="4" height="4" fill="none" stroke="#555"/><path d="M4.500 4V2.500h4v4H7" fill="none" stroke="#555"/></symbol>
<symbol id="closed" viewBox="0 0 11 11"><rect x=".5" y=".5" width="10" height="10" rx="2" fill="none" stroke="#555"/><path d="M3 3l5 5M8 3l-5 5" stroke="#444" stroke-width="2"/></symbol>
<symbol id="transp" viewBox="0 0 24 22"><rect x="1" y="0" width="22" height="16" fill="#dce6f0"/><path d="M4 2h18v12H4z" fill="#7fa0cc"/><path d="M22 2v12H10z" fill="#b4c6e0"/><path d="M10 5l5-2 6 1-2 4-3 1-1 4-2-4z" fill="#6f8fbe"/><path d="M0 0h3v16H0z" fill="#ccc"/><path d="M0 18.500h24" stroke="#cde" stroke-width="1.600" stroke-dasharray="1 1"/><path d="M0 21h24" stroke="#ccc" stroke-width="1.500"/></symbol>
<symbol id="histo" viewBox="0 0 24 16"><rect width="24" height="16" fill="#e4eaf0"/><path d="M0 0h3v16H0z" fill="#c4c4c4"/><path d="M5 2v12h18" stroke="#778" fill="none"/><path d="M6 10l4-4 3 4 3-2 3 4 4-4" stroke="#4b7eb5" fill="none"/></symbol>
<symbol id="rendr" viewBox="0 0 24 24"><path d="M5 20V6h14v14M12 6v15" stroke="#c8912c" stroke-width="3" fill="none"/><rect x="7" y="0" width="10" height="8" fill="#f0575c" stroke="#b33"/><rect x="0" y="16" width="11" height="7" fill="#fbe04a" stroke="#b9962c"/><rect x="13" y="16" width="11" height="7" fill="#8ab8f0" stroke="#4b7eb5"/></symbol>
<symbol id="hist" viewBox="0 0 24 24"><path d="M9 12Q1 12 1 7q1-5 8-5V0l6 4-6 5V6Q5 6 5 8t4 4z" fill="#74b088" stroke="#4a8a60" stroke-width=".6"/><path d="M15 12q8 0 8 5-1 5-8 5l-1-1q4-1 4-3t-3-2v3l-6-5 6-5z" fill="#ea7c3c" stroke="#b8541c" stroke-width=".6"/></symbol>
<symbol id="plus" viewBox="0 0 16 16"><path d="M5.500 1h5v4.500H15v5h-4.500V15h-5v-4.500H1v-5h4.500z" fill="#fff" stroke="#3f7a3f" stroke-width="1.200"/><path d="M8 3v10M3 8h10" stroke="#3f7a3f" stroke-width="1.800"/></symbol>
<symbol id="minus" viewBox="0 0 16 16"><rect x="1" y="5" width="14" height="6" fill="#fff" stroke="#e54848"/><path d="M3 8h10" stroke="#e54848" stroke-width="2.500"/></symbol>
<symbol id="swap" viewBox="0 0 16 16"><path d="M1 9q0-6 6-6V0l5 5-4 3V6Q5 6 4 10z" fill="#7fb97f"/><path d="M15 7q0 6-6 6v3l-5-5 4-3v2q3 0 4-4z" fill="#7fb97f"/></symbol>
</svg>

<header class="titlebar d-flex align-items-center">
  <svg width="16" height="16" viewBox="0 0 16 16" class="ms-1"><circle cx="7.500" cy="7.500" r="5.800" fill="none" stroke="#8cb43a" stroke-width="3.200"/><path d="M8 8l7 1v6h-3z" fill="#5a9a28"/><path d="M7 7l4 1 4 5-3 1-4-3z" fill="#ee8432"/></svg>
  <span class="ms-1">*Untitled Project - QGIS [burndem]</span>
  <div class="ms-auto d-flex">
    <button class="winbtn" aria-label="Minimize"><svg width="10" height="10" class="m-auto"><path d="M0 5.500h10" stroke="#fff"/></svg></button>
    <button class="winbtn" aria-label="Restore"><svg width="11" height="11" class="m-auto"><path d="M.500 2.500h7v8h-7zM2.500 2.500v-2h8v8h-3" fill="none" stroke="#fff"/></svg></button>
    <button class="winbtn" aria-label="Close"><svg width="11" height="11" class="m-auto"><path d="M.500.500l10 10M10.500.500l-10 10" stroke="#fff" stroke-width="1.200"/></svg></button>
  </div>
</header>

<nav class="menus d-flex">
  <a href="#">Pro<u>j</u>ect</a><a href="#"><u>E</u>dit</a><a href="#"><u>V</u>iew</a><a href="#"><u>L</u>ayer</a><a href="#"><u>S</u>ettings</a><a href="#"><u>P</u>lugins</a><a href="#">Vect<u>o</u>r</a><a href="#"><u>R</u>aster</a><a href="#"><u>D</u>atabase</a><a href="#"><u>W</u>eb</a><a href="#"><u>M</u>esh</a><a href="#">Pro<u>c</u>essing</a><a href="#"><u>H</u>elp</a>
</nav>

<div class="tools d-flex align-items-center" role="toolbar" aria-label="Project and map tools">
  <i class="grip first"></i>
  <button class="tbtn" aria-label="New"><svg><use href="#new"/></svg></button>
  <button class="tbtn" aria-label="Open"><svg><use href="#open"/></svg></button>
  <button class="tbtn" aria-label="Save"><svg><use href="#save"/></svg></button>
  <button class="tbtn" aria-label="New layout"><svg><use href="#layout"/></svg></button>
  <button class="tbtn" aria-label="Layout manager"><svg><use href="#manager"/></svg></button>
  <button class="tbtn" aria-label="Style manager"><svg><use href="#style"/></svg></button>
  <i class="grip"></i>
  <button class="tbtn on" aria-label="Pan"><svg><use href="#hand"/></svg></button>
  <button class="tbtn" aria-label="Pan to selection"><svg><use href="#panto"/></svg></button>
  <button class="tbtn" aria-label="Zoom in"><svg><use href="#zin"/></svg></button>
  <button class="tbtn" aria-label="Zoom out"><svg><use href="#zout"/></svg></button>
  <button class="tbtn" aria-label="Zoom full"><svg><use href="#zfull"/></svg></button>
  <button class="tbtn" disabled aria-label="Zoom to selection"><svg><use href="#zsel"/></svg></button>
  <button class="tbtn" aria-label="Zoom to layer"><svg><use href="#zlay"/></svg></button>
  <button class="tbtn" aria-label="Zoom native"><svg><use href="#znat"/></svg></button>
  <button class="tbtn" aria-label="Zoom last"><svg><use href="#zlast"/></svg></button>
  <button class="tbtn" disabled aria-label="Zoom next"><svg><use href="#znext"/></svg></button>
  <button class="tbtn" aria-label="New map view"><svg><use href="#newmap"/></svg></button>
  <button class="tbtn" aria-label="New bookmark"><svg><use href="#bookn"/></svg></button>
  <button class="tbtn" aria-label="Bookmarks"><svg><use href="#bookm"/></svg></button>
  <button class="tbtn" aria-label="Refresh"><svg><use href="#refresh"/></svg></button>
  <i class="grip"></i>
  <button class="tbtn" aria-label="Identify"><svg><use href="#info"/></svg></button>
  <button class="tbtn drop" disabled aria-label="Run action"><svg><use href="#action"/></svg><i class="arr"></i></button>
  <button class="tbtn drop" disabled aria-label="Select"><svg><use href="#select"/></svg><i class="arr"></i></button>
  <button class="tbtn drop" disabled aria-label="Select by value"><svg><use href="#form"/></svg><i class="arr"></i></button>
  <button class="tbtn" aria-label="Deselect"><svg><use href="#desel"/></svg></button>
  <button class="tbtn" disabled aria-label="Attribute table"><svg><use href="#tabl"/></svg></button>
  <button class="tbtn" disabled aria-label="Field calculator"><svg><use href="#abac"/></svg></button>
  <button class="tbtn" aria-label="Toolbox"><svg><use href="#gear"/></svg></button>
  <button class="tbtn" aria-label="Statistics"><svg><use href="#sigma"/></svg></button>
  <button class="tbtn drop" aria-label="Measure"><svg><use href="#ruler"/></svg><i class="arr"></i></button>
  <button class="tbtn" aria-label="Map tips"><svg><use href="#tip"/></svg></button>
  <button class="tbtn drop" aria-label="Annotation"><svg><use href="#annot"/></svg><i class="arr"></i></button>
</div>

<div class="tools d-flex align-items-center" role="toolbar" aria-label="Layer and editing tools">
  <i class="grip first"></i>
  <button class="tbtn" aria-label="Data source manager"><svg><use href="#dsm"/></svg></button>
  <button class="tbtn" aria-label="New GeoPackage"><svg><use href="#gpkg"/></svg></button>
  <button class="tbtn" aria-label="New shapefile"><svg><use href="#shp"/></svg></button>
  <button class="tbtn" aria-label="New SpatiaLite"><svg><use href="#quill"/></svg></button>
  <button class="tbtn" aria-label="New scratch layer"><svg><use href="#chip"/></svg></button>
  <i class="vsep"></i>
  <button class="tbtn" aria-label="New virtual layer"><svg><use href="#virt"/></svg></button>
  <i class="grip"></i>
  <button class="tbtn" disabled aria-label="Current edits"><svg><use href="#pencils"/></svg></button>
  <button class="tbtn" disabled aria-label="Toggle editing"><svg><use href="#pencil"/></svg></button>
  <button class="tbtn" disabled aria-label="Save edits"><svg><use href="#save"/></svg></button>
  <button class="tbtn" disabled aria-label="Add feature"><svg><use href="#vertex"/></svg></button>
  <button class="tbtn drop" disabled aria-label="Vertex tool"><svg><use href="#node"/></svg><i class="arr"></i></button>
  <button class="tbtn" disabled aria-label="Modify attributes"><svg><use href="#attr"/></svg></button>
  <button class="tbtn" disabled aria-label="Delete"><svg><use href="#trash"/></svg></button>
  <button class="tbtn" disabled aria-label="Cut"><svg><use href="#cut"/></svg></button>
  <button class="tbtn" disabled aria-label="Copy"><svg><use href="#copy"/></svg></button>
  <button class="tbtn" disabled aria-label="Paste"><svg><use href="#paste"/></svg></button>
  <button class="tbtn" disabled aria-label="Undo"><svg><use href="#undo"/></svg></button>
  <button class="tbtn" disabled aria-label="Redo"><svg><use href="#redo"/></svg></button>
  <i class="grip"></i>
  <button class="tbtn" disabled aria-label="Labeling"><svg><use href="#tagg"/></svg></button>
  <button class="tbtn" disabled aria-label="Diagrams"><svg><use href="#diag"/></svg></button>
  <i class="vsep"></i>
  <button class="tbtn" aria-label="Pinned labels"><svg><use href="#abpin"/></svg></button>
  <button class="tbtn" aria-label="Unplaced labels"><svg><use href="#abcred"/></svg></button>
  <i class="vsep"></i>
  <button class="tbtn" disabled aria-label="Pin labels"><svg><use href="#tpin"/></svg></button>
  <button class="tbtn" disabled aria-label="Show labels"><svg><use href="#teye"/></svg></button>
  <button class="tbtn" disabled aria-label="Move label"><svg><use href="#tmove"/></svg></button>
  <button class="tbtn" disabled aria-label="Rotate label"><svg><use href="#trot"/></svg></button>
  <button class="tbtn" disabled aria-label="Change label"><svg><use href="#tedit"/></svg></button>
  <i class="grip"></i>
  <button class="tbtn" aria-label="MetaSearch"><svg><use href="#meta"/></svg></button>
  <i class="grip"></i>
  <button class="tbtn" aria-label="Python console"><svg><use href="#py"/></svg></button>
  <i class="grip"></i>
  <button class="tbtn" aria-label="Help contents"><svg><use href="#help"/></svg></button>
  <i class="grip"></i>
</div>

<main class="d-flex flex-grow-1" style="min-height:0">
  <aside class="dock-left d-flex flex-column flex-shrink-0">
    <div class="dock-title d-flex align-items-center"><span class="me-auto">Layers</span>
      <button class="sq me-1" aria-label="Float"><svg width="11" height="11"><use href="#float"/></svg></button>
      <button class="sq" aria-label="Close"><svg width="11" height="11"><use href="#closed"/></svg></button></div>
    <div class="ltools d-flex">
      <button class="lbtn on" aria-label="Styling panel"><svg><use href="#brush2"/></svg></button>
      <button class="lbtn" aria-label="Add group"><svg><use href="#addgrp"/></svg></button>
      <button class="lbtn" aria-label="Map themes"><svg><use href="#eye"/></svg></button>
      <button class="lbtn" aria-label="Filter legend"><svg><use href="#filt"/></svg></button>
      <button class="lbtn menu2" disabled aria-label="Filter by expression"><svg><use href="#eps"/></svg><i class="arr"></i></button>
      <button class="lbtn" aria-label="Expand all"><svg><use href="#expd"/></svg></button>
      <button class="lbtn lit" aria-label="Collapse all"><svg><use href="#coll"/></svg></button>
      <button class="lbtn" aria-label="Remove layer"><svg><use href="#rem"/></svg></button>
    </div>
    <div class="tree flex-grow-1">
      <div class="trow sel d-flex align-items-center"><i class="arr"></i>
        <input class="chk" type="checkbox" checked id="v1"><svg width="13" height="13" class="ms-2 me-2"><use href="#rasterb"/></svg><label for="v1" class="fw-bold text-decoration-underline">dem</label><i class="mark2"></i></div>
      <div class="trow leg d-flex align-items-center"><i class="sw" style="background:#00c0c0"></i>-205</div>
      <div class="trow leg d-flex align-items-center"><i class="sw" style="background:#00ff00"></i>-24.8</div>
      <div class="trow leg d-flex align-items-center"><i class="sw" style="background:#ffff00"></i>155.4</div>
      <div class="trow leg d-flex align-items-center"><i class="sw" style="background:#ff8000"></i>335.6</div>
      <div class="trow leg d-flex align-items-center"><i class="sw" style="background:#c08040"></i>515.8</div>
      <div class="trow leg d-flex align-items-center"><i class="sw" style="background:#141414"></i>696</div>
      <div class="trow d-flex align-items-center"><input class="chk" type="checkbox" checked id="v2"><svg width="13" height="13" class="ms-2 me-2"><use href="#raster"/></svg><label for="v2" class="fw-bold">Hillshade</label><i class="mark2"></i></div>
    </div>
    <div class="dtabs d-flex align-items-start"><button class="dtab">Layers</button><button class="dtab off">Browser</button></div>
  </aside>
  <div class="split"><i></i></div>
  <section class="mapview d-flex flex-grow-1 align-items-center justify-content-center"><canvas id="map" width="584" height="834" role="img" aria-label="Elevation map"></canvas></section>
  <div class="split wide"><i></i></div>
  <aside class="dock-right d-flex flex-column flex-shrink-0">
    <div class="dock-title r d-flex align-items-center"><span class="me-auto">Layer Styling</span>
      <button class="sq me-1" aria-label="Float"><svg width="11" height="11"><use href="#float"/></svg></button>
      <button class="sq" aria-label="Close"><svg width="11" height="11"><use href="#closed"/></svg></button></div>
    <div class="withicon me-1"><svg width="13" height="13"><use href="#raster"/></svg><select class="field" aria-label="Layer"><option>dem</option></select></div>
    <div class="body2 d-flex flex-grow-1">
      <div class="sidetabs flex-shrink-0">
        <button aria-label="Symbology"><svg width="22" height="20"><use href="#brush"/></svg></button>
        <button aria-label="Transparency"><svg width="22" height="20"><use href="#transp"/></svg></button>
        <button aria-label="Histogram"><svg width="22" height="15"><use href="#histo"/></svg></button>
        <button class="tall" aria-label="Rendering"><svg width="22" height="22"><use href="#rendr"/></svg></button>
        <button aria-label="History"><svg width="20" height="20"><use href="#hist"/></svg></button>
      </div>
      <div class="flex-grow-1 d-flex flex-column" style="min-width:0">
        <div class="scrollrow d-flex">
          <div class="styler flex-grow-1">
            <div class="withicon mb-2"><svg width="13" height="13" viewBox="0 0 13 13"><rect x=".5" y=".5" width="12" height="12" fill="#f6e6a0" stroke="#555"/><path d="M1 1h3v11H1z" fill="#dd5533"/><path d="M4 1h2v11H4z" fill="#f6b77a"/><path d="M9 1h3v11H9z" fill="#68b0a0"/></svg><select class="field" aria-label="Renderer"><option>Singleband pseudocolor</option></select></div>
            <div class="inset-a">
              <div class="frow"><label class="w-band" for="band">Band</label><select id="band" class="field flex-fill"><option>Band 1 (Gray)</option></select></div>
              <div class="frow"><label class="w-band" for="mn">Min</label><input id="mn" class="field flex-fill" value="-205" size="4"><label for="mx" class="w-max">Max</label><input id="mx" class="field flex-fill" value="696" size="4"></div>
            </div>
            <div class="frow disclose"><svg width="8" height="11"><path d="M0 0l7 5.500L0 11z" fill="#333"/></svg><span class="head2">Min / Max Value Settings</span></div>
            <div class="inset-b">
              <div class="frow"><label class="w-interp" for="ip">Interpolation</label><select id="ip" class="field flex-fill"><option>Linear</option></select></div>
              <div class="frow"><span class="w-interp">Color ramp</span><button class="push ramp flex-fill" aria-label="Color ramp"><span></span></button><button class="push more" aria-label="Ramp menu"><i class="arr"></i></button></div>
              <div class="frow"><label class="w-interp" for="sfx">Label unit<br>suffix</label><input id="sfx" class="field flex-fill"></div>
              <div class="classes d-flex overflow-hidden">
                <div class="flex-grow-1"><table><thead><tr><th class="c-val">Value</th><th class="c-col">Color</th><th>Label</th></tr></thead><tbody>
                  <tr><td>-205</td><td><div class="chip" style="background:#00c0c0"></div></td><td>-205</td></tr>
                  <tr><td>-24.8</td><td><div class="chip" style="background:#00ff00"></div></td><td>-24.8</td></tr>
                  <tr><td>155.4</td><td><div class="chip" style="background:#ffff00"></div></td><td>155.4</td></tr>
                  <tr><td>335.6</td><td><div class="chip" style="background:#ff8000"></div></td><td>335.6</td></tr>
                  <tr><td>515.8</td><td><div class="chip" style="background:#c08040"></div></td><td>515.8</td></tr>
                  <tr><td></td><td><div class="chip" style="background:#141414"></div></td><td></td></tr>
                </tbody></table></div>
                <div class="vbar d-flex flex-column"><div class="cap"><i class="arr up"></i></div><div class="thumb" style="height:184px"></div><div class="flex-grow-1"></div><div class="cap dn"><i class="arr"></i></div></div>
              </div>
              <div class="frow"><label for="md" style="width:44px">Mode</label><select id="md" class="field w125"><option>Continuous</option></select><label for="cl" class="ms-auto me-2">Classes</label><div class="spin dis s56"><input id="cl" value="6" disabled><span class="steps"><i class="arr up"></i><i class="arr"></i></span></div></div>
              <div class="frow" style="gap:6px"><button class="push wide">Classify</button>
                <button class="push mini" aria-label="Add"><svg width="15" height="15"><use href="#plus"/></svg></button>
                <button class="push mini" aria-label="Remove"><svg width="15" height="15"><use href="#minus"/></svg></button>
                <button class="push mini" aria-label="Sort"><svg width="16" height="16"><use href="#swap"/></svg></button>
                <button class="push mini" aria-label="Load"><svg width="16" height="16"><use href="#open"/></svg></button>
                <button class="push mini" aria-label="Export"><svg width="16" height="16" viewBox="0 0 24 24"><use href="#save"/><circle cx="19" cy="19" r="5" fill="#5da35d"/></svg></button></div>
              <div class="frow pt-1" style="gap:5px"><input class="chk" type="checkbox" id="clip"><label for="clip">Clip out of range values</label></div>
            </div>
            <div class="head2" style="margin:16px 0 0 2px">Layer Rendering</div>
            <div class="group">
              <div class="frow"><label class="w-blend" for="bm">Blending mode</label><select id="bm" class="field flex-fill"><option>Multiply</option></select></div>
              <div class="frow"><label class="w-blend" for="br">Brightness</label><input type="range" id="br"><div class="spin s62"><input value="0" aria-label="Brightness value"><span class="steps"><i class="arr up"></i><i class="arr"></i></span></div></div>
              <div class="frow"><label class="w-blend" for="sa">Saturation</label><input type="range" id="sa"><div class="spin s62"><input value="0" aria-label="Saturation value"><span class="steps"><i class="arr up"></i><i class="arr"></i></span></div></div>
              <div class="frow"><label class="w-blend" for="co">Contrast</label><input type="range" id="co"><div class="spin s62"><input value="0" aria-label="Contrast value"><span class="steps"><i class="arr up"></i><i class="arr"></i></span></div></div>
              <div class="frow"><label class="w-blend" for="gs">Grayscale</label><select id="gs" class="field flex-fill"><option>Off</option></select></div>
              <div class="frow"><span class="w-blend"></span><input class="chk" type="checkbox" id="cz"><label for="cz" class="ms-1">Colorize</label><button class="push ms-auto ramp pale" disabled aria-label="Colorize color"><span></span></button><button class="push more" disabled aria-label="Color menu"><i class="arr opacity-50"></i></button></div>
            </div>
          </div>
          <div class="vbar d-flex flex-column" style="margin-right:3px"><div class="cap"><i class="arr up"></i></div><div class="thumb" style="height:623px"></div><div class="flex-grow-1"></div><div class="cap dn"><i class="arr"></i></div></div>
        </div>
        <div class="foot d-flex align-items-center">
          <button class="push small2" aria-label="Undo"><svg width="14" height="14"><use href="#undo"/></svg></button>
          <button class="push small2" style="margin-left:6px" aria-label="Redo"><svg width="14" height="14"><use href="#redo"/></svg></button>
          <input class="chk ms-auto" type="checkbox" checked id="lu"><label for="lu" style="margin:0 12px 0 5px">Live update</label><button class="push wide">Apply</button>
        </div>
      </div>
    </div>
  </aside>
</main>

<footer class="statusbar d-flex align-items-center">
  <div class="locate ms-1"><svg width="15" height="15"><circle cx="6" cy="6" r="4.500" fill="none" stroke="#999" stroke-width="1.400"/><path d="M9.500 9.500l4 4" stroke="#999" stroke-width="2"/></svg><input class="field" placeholder="Type to locate (Ctrl+K)" aria-label="Type to locate"></div>
  <span class="txt ms-2">Ready</span>
  <label for="cd" class="ms-auto me-1">Coordinate</label><input id="cd" class="field text-center w125" value="251984,5638972">
  <svg width="17" height="18" viewBox="0 0 17 18" class="ms-1"><path d="M3 1l8 10M1 6l7 7M7 1l6 7M1 3l12 11" stroke="#333" stroke-width="1.600"/><circle cx="11" cy="12" r="4" fill="#ccc" stroke="#333"/><path d="M12 4l4-3" stroke="#333"/></svg>
  <label for="sc" style="margin:0 4px 0 12px">Scale</label><select id="sc" class="field split2"><option>1:448315</option></select>
  <svg width="12" height="16" viewBox="0 0 12 16" style="margin:0 9px 0 12px"><path d="M3 8V4q0-3 3-3t3 3v4" fill="none" stroke="#888" stroke-width="1.800"/><rect y="7" width="12" height="8" rx="1" fill="#555"/></svg>
  <label for="mg" class="me-1">Magnifier</label><div class="spin s103"><input id="mg" value="100%"><span class="steps"><i class="arr up"></i><i class="arr"></i></span></div>
  <label for="ro" style="margin:0 9px">Rotation</label><div class="spin s99"><input id="ro" value="0.0 °"><span class="steps"><i class="arr up"></i><i class="arr"></i></span></div>
  <input class="chk" style="margin:0 5px 0 7px" type="checkbox" checked id="rn"><label for="rn">Render</label>
  <svg width="14" height="14" viewBox="0 0 14 14" style="margin:0 5px 0 21px"><circle cx="7" cy="7" r="6.500" fill="#777"/><path d="M0 4.500h14M0 9.500h14M7 0v14M7 0Q0 7 7 14 14 7 7 0" stroke="#ddd" fill="none" stroke-width=".7"/></svg>
  <span class="txt crs">EPSG:32632</span>
  <svg width="17" height="16" viewBox="0 0 17 16" style="margin:0 7px 0 23px"><path d="M8 0q8 0 8 6.500-.5 4-2 5l1 4-4-2.500Q0 14 0 6.500 0 0 8 0z" fill="#555"/></svg>
</footer>

<script>
// Synthetic terrain: an elevation grid refined with noise, valleys and quarry pits, coloured by the ramp and shaded from the north-west.
(function(){
const W=584,H=834,cv=document.getElementById('map'),cx=cv.getContext('2d');
const G=[
[30,28,56,68,68,42,40,40,50],[36,26,52,88,84,50,44,42,44],[40,45,35,88,90,78,62,45,40],[60,72,75,60,85,82,66,70,42],
[100,92,85,82,72,78,66,85,42],[115,145,135,115,90,76,75,80,70],[160,200,175,180,140,95,105,85,105],[180,225,195,290,380,175,130,112,115],
[240,290,390,440,430,400,185,142,138],[360,420,480,510,450,450,370,260,270],[390,510,520,550,550,450,450,420,390],
[390,440,510,570,610,550,490,450,370],[370,440,440,530,620,520,460,420,390]];
function rnd(x,y,s){let n=Math.imul(x,374761393)+Math.imul(y,668265263)+Math.imul(s,974711);n=Math.imul(n^(n>>>13),1274126177);return((n^(n>>>16))>>>0)/2147483648-1}
function ns(x,y,s){const i=Math.floor(x),j=Math.floor(y);let u=x-i,v=y-j;u=u*u*u*(u*(u*6-15)+10);v=v*v*v*(v*(v*6-15)+10);
 const a=rnd(i,j,s),b=rnd(i+1,j,s),c=rnd(i,j+1,s),d=rnd(i+1,j+1,s);return a+(b-a)*u+(c-a)*v+(a-b-c+d)*u*v}
function grid(x,y){x=Math.min(Math.max(x/73,0),7.999);y=Math.min(Math.max(y/69.5,0),11.999);const i=x|0,j=y|0,u=x-i,v=y-j;
 const cr=(a,b,c,d,t)=>b+.5*t*(c-a+t*(2*a-5*b+4*c-d+t*(3*(b-c)+d-a)));const r=[];
 for(let k=-1;k<3;k++){const R=G[Math.min(Math.max(j+k,0),12)];r.push(cr(R[Math.max(i-1,0)],R[i],R[i+1],R[Math.min(i+2,8)],u))}
 return cr(r[0],r[1],r[2],r[3],v)}
function layer(){const c=document.createElement('canvas');c.width=W;c.height=H;return c.getContext('2d',{willReadFrequently:true})}
function path(g,p){g.beginPath();for(let i=0;i<p.length;i+=2)g.lineTo(p[i],p[i+1])}
// flat lowlands
const P=layer();P.fillStyle='#000';P.fillRect(0,0,W,H);P.filter='blur(3px)';P.fillStyle='rgb(195,195,195)';
path(P,[-9,-9,122,-9,122,14,134,58,168,85,176,135,196,155,235,192,243,225,266,269,296,302,355,340,375,385,345,362,314,334,280,318,256,288,230,245,208,212,188,190,150,165,103,149,64,139,-9,165]);P.fill();
path(P,[0,225,40,240,80,235,110,250,60,245,20,240]);P.fill();
P.filter='blur(7px)';P.fillStyle='rgb(170,170,170)';
path(P,[342,-30,613,-30,613,352,547,325,531,268,511,165,500,105,453,100,400,100,348,80,342,65]);P.fill();
const PD=P.getImageData(0,0,W,H).data;
// valleys: width, floor elevation, points
const V=[[2.6,50,[186,190,172,225,134,268,118,317,120,359,130,392]],[3,60,[5,385,14,430,24,455,45,470]],
[3,95,[362,402,365,465,350,485,328,492]],[4,135,[328,492,332,512,343,522,344,545,356,555,345,575]],[2.5,150,[343,522,325,530,308,525,298,510]],
[5,310,[345,575,324,565,310,580,293,585,290,600,290,615,274,622,260,630]],[2.200,350,[274,622,231,638,196,643]],[3.500,300,[293,600,320,610,328,622]],
[2,360,[304,535,270,545,255,560,240,555]],[2.200,160,[199,430,222,468,219,495,184,520]],[1.800,330,[184,520,182,538,205,548]],[2,150,[272,412,262,440,274,462,272,500]],
[2.200,370,[356,632,336,680,338,735,330,765]],[1.800,390,[375,635,395,690,430,702,432,745]],[2.200,210,[525,690,513,635,515,620]],
[1.800,400,[205,645,204,680,215,705,245,725]],[1.800,390,[90,700,138,640,134,605]],[3,200,[0,585,28,580,45,592,78,577,90,578,86,610]],[2,340,[112,735,70,743,48,768,40,790,10,790]],
[3,310,[0,795,30,788,58,800]],[3,190,[584,758,572,750,560,775,550,815,530,820]],[2,220,[0,650,20,658]],[1.800,110,[448,402,450,455,468,485,455,515,420,530]],
[2,125,[540,440,520,500,470,560,450,600]],[1.600,460,[310,750,262,720,258,750,270,770]],[1.600,470,[170,770,210,775,245,770]],[2.500,330,[400,520,380,560]],
[1.600,470,[300,700,262,712,255,735]],[1.600,480,[330,765,300,775,305,820]],[1.600,460,[180,655,176,690,150,700]],[1.600,250,[475,620,495,590,505,560]],[1.600,300,[430,640,455,610,460,590]],[1.500,360,[540,720,520,680,545,650]]];
const R=layer();R.fillStyle='rgb(128,128,128)';R.fillRect(0,0,W,H);
function shp(v,b,p){R.filter='blur('+b+'px)';R.fillStyle='rgb('+v+','+v+','+v+')';path(R,p);R.closePath();R.fill()}
// quarries
shp(72,2,[375,144,392,143,388,168,386,205,379,212,366,204,352,191,356,184,380,174]);
shp(40,2,[349,295,368,292,394,296,381,332,363,341]);shp(0,3,[358,296,374,295,366,328]);
shp(72,2,[251,323,264,321,278,332,260,357]);shp(48,2,[463,264,479,277,477,284,463,280]);shp(92,1,[397,196,403,194,401,205,397,202]);
// spoil heaps
shp(200,2,[325,285,330,280,340,278,352,279,354,292,345,300,338,302,346,325,332,308,324,298]);
shp(176,1.500,[424,183,434,166,442,167,442,178,430,184]);shp(145,.8,[440,259,451,245,464,256,455,264]);
shp(160,2,[481,266,512,286,505,297,502,310,492,292]);shp(145,1,[390,184,402,182,406,192,396,212,388,214]);shp(142,1,[414,200,430,205,428,218]);shp(165,1,[185,151,194,153,190,158]);
shp(138,3,[508,310,530,300,545,320,555,345,575,365,584,395,570,380,540,350,522,335]);shp(160,2,[572,0,584,0,584,14,576,10]);
for(let i=0;i<110;i++){const x=(rnd(i,3,5)*.5+.5)*W,y=(rnd(i,7,6)*.5+.5)*520,v=128+rnd(i,2,9)*12,s=1+Math.abs(rnd(i,1,1))*2;shp(v|0,.8,[x,y,x+s,y-s,x+s*2,y+1,x+s,y+s])}
for(let i=0;i<60;i++){const t=(rnd(i,31,5)*.5+.5),x=490+t*84+rnd(i,9,2)*18,y=285+t*150+rnd(i,8,8)*16,v=rnd(i,6,6)>-.3?139:122,s=3+Math.abs(rnd(i,4,4))*9;shp(v,1.200,[x,y,x+s,y-s*.7*Math.abs(rnd(i,5,3)),x+s*1.400,y+s*.6,x+s*.5,y+s])}
R.filter='blur(.4px)';R.lineWidth=.9;
function fan(x1,x2,yt,cx0,cy0,n){for(let i=0;i<=n;i++){R.strokeStyle=i%2?'rgba(50,50,50,.16)':'rgba(120,120,120,.2)';path(R,[x1+(x2-x1)*i/n,yt,cx0+(i/n-.5)*14,cy0]);R.stroke()}}
fan(349,394,296,370,334,13);fan(254,276,326,262,354,7);fan(377,390,146,378,206,5);
const RD=R.getImageData(0,0,W,H).data;
const B=[[98,675,20,14,220],[108,692,14,14,130],[75,670,26,18,70],[186,618,14,14,190],[165,640,20,18,130],[150,662,18,14,150],[204,582,15,18,120],[222,556,12,14,100],[234,541,13,13,140],[130,655,32,24,60],[70,700,40,16,110],[20,718,45,10,130],
[265,780,20,30,120],[262,795,12,30,120],[285,740,28,26,70],[250,690,36,26,110],[215,670,26,22,80],[335,770,18,12,130],[260,825,28,22,70],[225,745,50,26,70],[365,720,28,20,110],[290,665,30,20,90],[170,740,40,14,90],[200,780,40,20,50],[110,750,24,14,90],[455,730,34,20,90],[395,800,36,22,70],[430,660,30,24,50],[500,710,26,20,50],
[60,450,26,5,130],[88,465,18,6,130],[40,435,14,6,90],[500,585,14,7,140],[440,600,16,9,110],[288,458,22,20,110],[215,440,24,18,70],[230,470,22,24,60],[25,818,24,10,120],[105,815,12,10,110],[540,780,6,5,140],[545,690,24,14,60],[12,515,10,24,120],[350,520,10,34,40],[370,530,18,24,110],[395,555,20,40,90],[500,660,25,15,40],[30,400,30,20,40]];
const h=new Float32Array(W*H);
for(let y=0;y<H;y++)for(let x=0;x<W;x++){
 const w1=ns(x/38,y/38,1),w2=ns(x/38,y/38,2),w3=ns(x/9,y/9,3),w4=ns(x/9,y/9,4);
 const X=x+w1*12+w3*4,Y=y+w2*12+w4*4;
 let e=grid(X,Y);
 for(const b of B){const dx=(X-b[0])/b[2],dy=(Y-b[1])/b[3],q=dx*dx+dy*dy;if(q<9)e+=b[4]*.8*Math.exp(-q*.6)}
 if(e>540)e=540+(e-540)*.5;
 const rg=Math.min(1,Math.max(0,(e-105)/300));
 const u=X*.92+Y*.4,v=Y*.92-X*.4;
 const r1=Math.abs(ns(u/27,v/27,11)),r2=Math.abs(ns((u+w1*6)/13,(v-w2*6)/13,12)),r3=Math.abs(ns(X/6.500,Y/6.500,13)),r4=Math.abs(ns(x/3.200+w3,y/3.200+w4,14));
 e+=rg*((Math.sqrt(r1)-.55)*70+(Math.sqrt(r2)-.55)*54+(r3-.3)*36+(r4-.3)*16);
 e+=(1-rg)*((ns(x/46,y/30,21))*10+Math.abs(ns(X/14,Y/9,22))*5+ns(x/5,y/5,23)*2+Math.abs(w3)*4)+ns(x/1.900,y/1.900,24)*.9;
 const px=Math.max(0,Math.min(W-1,(x+w3*3+w1*4)|0)),py=Math.max(0,Math.min(H-1,(y+w4*3+w2*4)|0)),a=PD[(py*W+px)*4]/255;
 e=e*(1-a)+(38+ns(x/20,y/20,31)*5+w3*1.500)*a;
 const Xv=x+w3*5+ns(x/4,y/4,41)*1.500,Yv=y+w4*5+ns(x/4,y/4,42)*1.500;
 for(const q of V){const pt=q[2];let m=1e9;for(let i=0;i+3<pt.length;i+=2){const ax=pt[i],ay=pt[i+1],bx=pt[i+2]-ax,by=pt[i+3]-ay;
   let t=((Xv-ax)*bx+(Yv-ay)*by)/(bx*bx+by*by);t=t<0?0:t>1?1:t;const ex=Xv-ax-bx*t,ey=Yv-ay-by*t,d=ex*ex+ey*ey;if(d<m)m=d}
  if(m<q[0]*q[0]*36&&q[1]<e){const k=Math.exp(-Math.sqrt(m)/(q[0]*1.200))*.9;e=e*(1-k)+q[1]*k}}
 e+=(RD[(y*W+x)*4]-128)*2.100;
 h[y*W+x]=e}
const S=[[-205,0,192,192],[-24.8,0,255,0],[155.4,255,255,0],[335.6,255,128,0],[515.8,192,128,64],[696,20,20,20]];
const im=cx.createImageData(W,H),D=im.data;
for(let y=0;y<H;y++)for(let x=0;x<W;x++){
 const i=y*W+x,e=Math.max(-205,Math.min(696,h[i]));
 let gx=(h[y*W+Math.min(x+1,W-1)]-h[y*W+Math.max(x-1,0)])*.012,gy=(h[Math.min(y+1,H-1)*W+x]-h[Math.max(y-1,0)*W+x])*.012;
 gx=gx/(1+Math.abs(gx)*1.300);gy=gy/(1+Math.abs(gy)*1.300);
 let s=(.707+.5*gx+.5*gy)/Math.sqrt(1+gx*gx+gy*gy);s=Math.max(.2,Math.min(1,s));
 let k=0;while(k<4&&e>S[k+1][0])k++;const t=(e-S[k][0])/(S[k+1][0]-S[k][0]);
 for(let c=0;c<3;c++)D[i*4+c]=(S[k][c+1]+(S[k+1][c+1]-S[k][c+1])*t)*s;
 if(e<-120)D[i*4+1]*=1-(-120-e)/200;
 D[i*4+3]=255}
cx.putImageData(im,0,0);
})();
</script>
</body>
</html>
